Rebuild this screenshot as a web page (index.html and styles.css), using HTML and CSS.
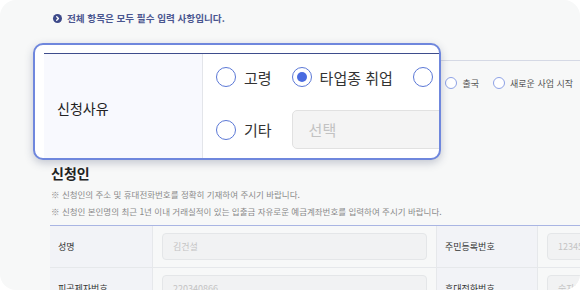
FILE: index.html
```html
<!DOCTYPE html>
<html lang="ko">
<head>
  <meta charset="UTF-8">
  <meta name="viewport" content="width=device-width, initial-scale=1.0">
  <title>신청서 작성</title>
  <link rel="stylesheet" href="styles.css">
</head>
<body>
  <div class="card">
    <p class="notice">
      <span class="notice-icon">
        <svg width="9" height="9" viewBox="0 0 9 9"><polyline points="3.7,2.7 5.5,4.5 3.7,6.3" fill="none" stroke="#fff" stroke-width="1.3" stroke-linecap="round" stroke-linejoin="round"/></svg>
      </span>
      전체 항목은 모두 필수 입력 사항입니다.
    </p>

    <div class="reason-table">
      <div class="reason-row">
        <div class="reason-th">신청사유</div>
        <div class="reason-td radios-row">
          <label class="radio"><span class="radio-mark"></span>고령</label>
          <label class="radio"><span class="radio-mark checked"></span>타업종 취업</label>
          <label class="radio"><span class="radio-mark"></span>출국</label>
          <label class="radio"><span class="radio-mark"></span>새로운 사업 시작</label>
        </div>
      </div>
      <div class="reason-row">
        <div class="reason-th"></div>
        <div class="reason-td">
          <label class="radio"><span class="radio-mark"></span>기타</label>
          <div class="select small">선택</div>
        </div>
      </div>
    </div>

    <h2 class="section-title">신청인</h2>
    <p class="note">※ 신청인의 주소 및 휴대전화번호를 정확히 기재하여 주시기 바랍니다.</p>
    <p class="note">※ 신청인 본인명의 최근 1년 이내 거래실적이 있는 입출금 자유로운 예금계좌번호를 입력하여 주시기 바랍니다.</p>

    <div class="form-table">
      <div class="th">성명</div>
      <div class="td"><div class="input">김건설</div></div>
      <div class="th">주민등록번호</div>
      <div class="td"><div class="input">1234567-1234567</div></div>
      <div class="th">피공제자번호</div>
      <div class="td"><div class="input">220340866</div></div>
      <div class="th">휴대전화번호</div>
      <div class="td"><div class="input">숫자만 입력</div></div>
    </div>

    <!-- magnified view of the 신청사유 row -->
    <div class="zoom">
      <div class="zoom-table">
        <div class="zoom-th">신청사유</div>
        <div class="zoom-td first">
          <label class="radio"><span class="radio-mark"></span>고령</label>
          <label class="radio"><span class="radio-mark checked"></span>타업종 취업</label>
          <label class="radio"><span class="radio-mark"></span>출국</label>
        </div>
        <div class="zoom-td second">
          <label class="radio"><span class="radio-mark"></span>기타</label>
          <div class="select">선택</div>
        </div>
      </div>
    </div>
  </div>
</body>
</html>
```

FILE: styles.css
```css
* {
  box-sizing: border-box;
}

body {
  margin: 0;
  background: #ffffff;
  font-family: "Noto Sans CJK KR", "Noto Sans", sans-serif;
  font-variant-emoji: text;
}

.card {
  position: relative;
  width: 580px;
  height: 290px;
  background: #f7f8f8;
  border-radius: 16px;
  overflow: hidden;
  padding: 12px 0 0 50px;
}

.notice {
  margin: 0 0 0 3px;
  display: flex;
  align-items: center;
  gap: 5px;
  font-size: 9.6px;
  font-weight: 700;
  line-height: 12px;
  color: #4a5690;
}

.notice-icon {
  width: 9px;
  height: 9px;
  border-radius: 50%;
  background: #3d4a8a;
  display: flex;
}

/* background 신청사유 table, mostly under the zoom */
.reason-table {
  margin-top: 36px;
  width: 560px;
  border-top: 1px solid #d5d9e5;
}

.reason-row {
  display: flex;
  height: 44px;
}

.reason-th {
  width: 103px;
}

.reason-td {
  display: flex;
  align-items: center;
  gap: 14px;
  padding-left: 8px;
  font-size: 9px;
  color: #555;
}

.radios-row {
  padding-left: 170px;
}

.radio {
  display: flex;
  align-items: center;
  gap: 5px;
  white-space: nowrap;
}

.radio-mark {
  width: 12px;
  height: 12px;
  border-radius: 50%;
  border: 1px solid #8ea2e6;
  background: #fff;
  display: flex;
  align-items: center;
  justify-content: center;
}

.radio-mark.checked::after {
  content: "";
  width: 6px;
  height: 6px;
  border-radius: 50%;
  background: #4a6be0;
}

.select {
  background: #f4f4f4;
  border: 1px solid #e1e1e1;
  border-radius: 5px;
  color: #c2c2c2;
  display: flex;
  align-items: center;
}

.select.small {
  width: 120px;
  height: 24px;
  padding-left: 8px;
}

.section-title {
  margin: 14px 0 0 1px;
  font-size: 14px;
  line-height: 20px;
  font-weight: 700;
  color: #222;
}

.note {
  margin: 0 0 0 1px;
  font-size: 8.5px;
  line-height: 17px;
  color: #8a8a8a;
}

.section-title + .note {
  margin-top: 3px;
}

.form-table {
  margin-top: 5px;
  width: 560px;
  display: grid;
  grid-template-columns: 103px 284px 101px 1fr;
  grid-auto-rows: 42px;
  border-top: 1px solid #a9b5e3;
}

.form-table .th,
.form-table .td {
  display: flex;
  align-items: center;
  border-bottom: 1px solid #e6e8eb;
  border-right: 1px solid #e6e8eb;
}

.form-table .th {
  background: #f2f3f7;
  padding-left: 8px;
  font-size: 9px;
  color: #333;
}

.form-table .td {
  padding: 0 9px;
}

.input {
  width: 100%;
  height: 27px;
  background: #f1f2f3;
  border: 1px solid #e4e6e8;
  border-radius: 4px;
  padding-left: 10px;
  display: flex;
  align-items: center;
  font-size: 9px;
  color: #c4c4c4;
  white-space: nowrap;
}

/* magnifier */
.zoom {
  position: absolute;
  left: 33px;
  top: 43px;
  width: 408px;
  height: 117px;
  background: #fff;
  border: 2px solid #6f87dd;
  border-radius: 10px;
  box-shadow: 0 3px 8px rgba(40, 50, 90, 0.25);
  overflow: hidden;
  padding: 8px 0 0 9px;
}

.zoom-table {
  width: 600px;
  display: grid;
  grid-template-columns: 159px 1fr;
  border-top: 1.5px solid #3e4d8c;
}

.zoom-th {
  grid-row: span 2;
  background: #f8f9fe;
  border-right: 1px solid #e3e5ea;
  display: flex;
  align-items: center;
  padding-left: 13px;
  font-size: 14px;
  color: #222;
}

.zoom-td {
  display: flex;
  align-items: center;
  gap: 20px;
  padding-left: 13px;
  font-size: 15px;
  color: #333;
}

.zoom-td.first {
  height: 46px;
}

.zoom-td.second {
  padding-top: 10px;
  padding-bottom: 12px;
}

.zoom .radio {
  gap: 8px;
}

.zoom .radio-mark {
  width: 20px;
  height: 20px;
  border: 1.5px solid #5b78d6;
}

.zoom .radio-mark.checked::after {
  width: 10px;
  height: 10px;
}

.zoom .select {
  width: 300px;
  height: 39px;
  padding-left: 16px;
  font-size: 15px;
}
```
